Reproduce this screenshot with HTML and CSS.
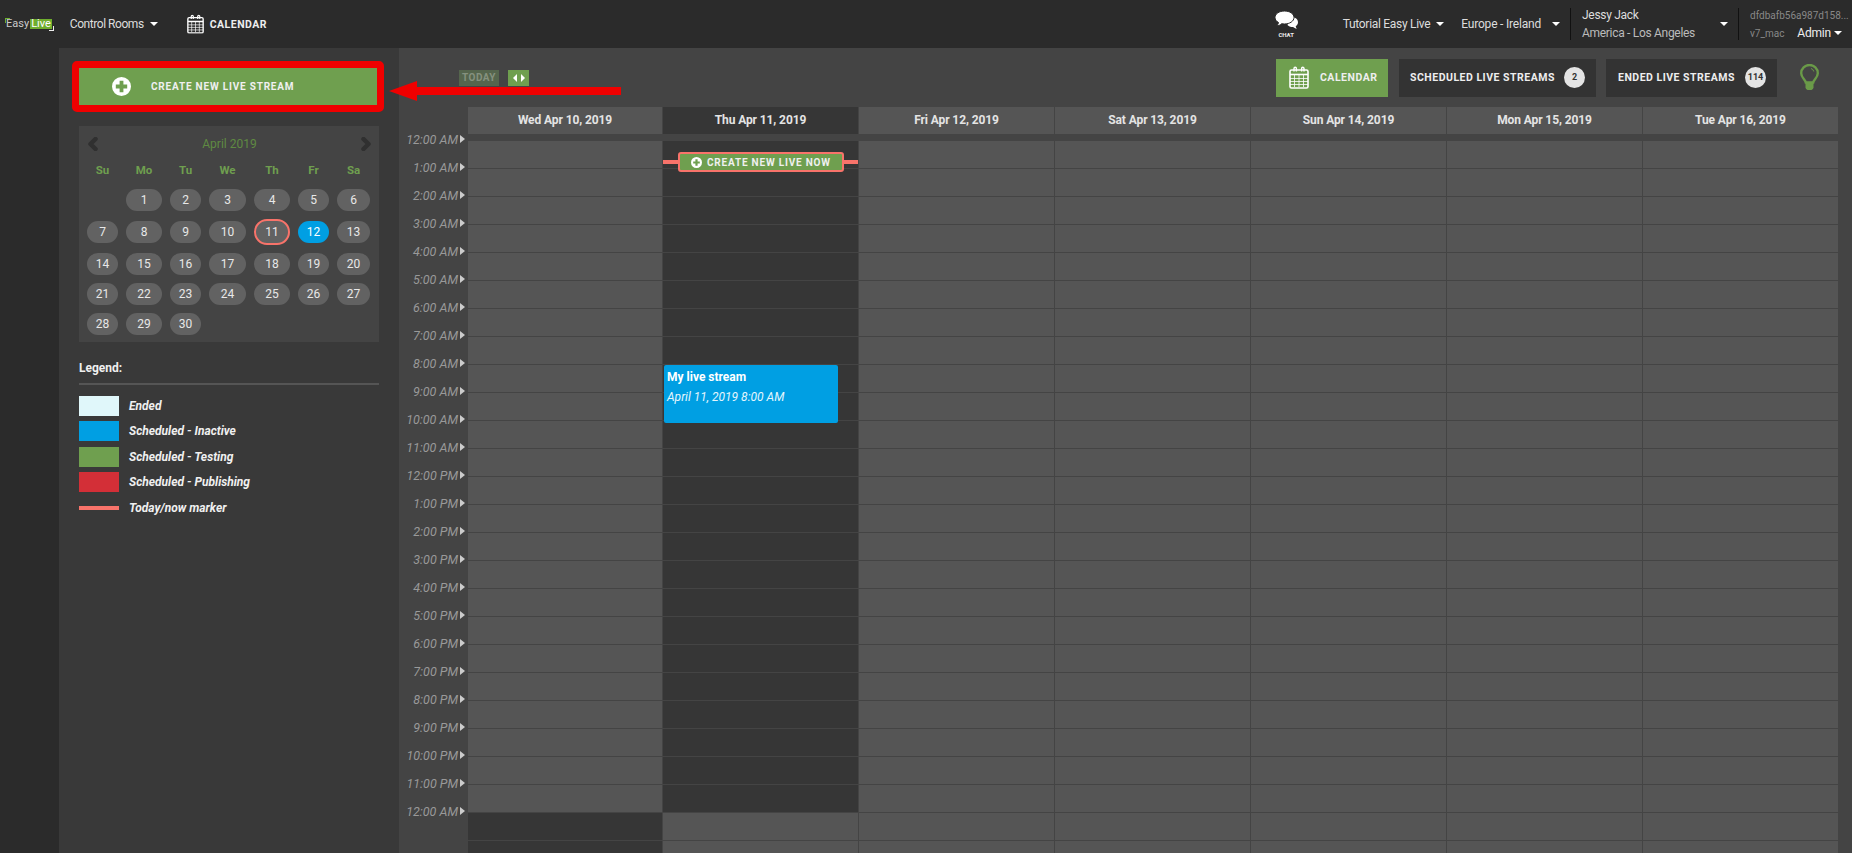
FILE: index.html
```html
<!DOCTYPE html>
<html lang="en">
<head>
    <meta charset="UTF-8">
    <title>Easy Live - Calendar</title>
    <link rel="stylesheet" href="styles.css">
</head>
<body>
<!-- top bar -->
<header class="topbar">
    <a class="logo">Easy<span class="logo-live">Live</span></a>
    <a class="nav-item rooms">Control Rooms<i class="caret"></i></a>
    <a class="nav-cal">
        <svg class="cal-icon small" viewBox="0 0 20 23"><use href="#calendar"></use></svg>
        CALENDAR
    </a>
    <div class="topbar-right">
        <a class="chat">
            <svg class="chat-icon" viewBox="0 0 23 18">
                <path d="M15 6.500h3c2.700 0 5 2 5 4.800 0 1.800-.9 3-2.300 3.900.1 1 .5 1.800 1.100 2.500-1.500-.1-2.800-.7-3.700-1.600-2.500 0-4.800-.8-5.600-2.100z" fill="#fff"/>
                <path d="M9.500 0C4.300 0 0 2.800 0 6.500c0 2.100 1.400 3.900 3.500 5-.2 1.300-.9 2.400-1.800 3.200 2 0 3.800-.8 5-2 .9.200 1.800.3 2.800.3 5.200 0 9.500-2.800 9.500-6.500S14.700 0 9.500 0z" fill="#fff" stroke="#2b2b2b"/>
            </svg>
            <span class="chat-label">CHAT</span>
        </a>
        <a class="nav-item tutorial">Tutorial Easy Live<i class="caret"></i></a>
        <a class="nav-item region">Europe - Ireland<i class="caret"></i></a>
        <div class="user">
            <div class="user-text">
                <span>Jessy Jack</span>
                <span class="user-zone">America - Los Angeles</span>
            </div>
            <i class="caret"></i>
        </div>
        <div class="account">
            <span class="account-id">dfdbafb56a987d158...</span>
            <div class="account-row">
                <span class="account-id">v7_mac</span>
                <a class="nav-item admin">Admin<i class="caret"></i></a>
            </div>
        </div>
    </div>
</header>

<div class="layout">
    <div class="rail"></div>

    <!-- left column -->
    <aside class="sidebar">
        <a class="create-btn">
            <svg class="plus-icon" viewBox="0 0 20 20"><use href="#plus"></use></svg>
            CREATE NEW LIVE STREAM
        </a>

        <div class="picker">
            <div class="picker-head">
                <svg class="picker-arrow" viewBox="0 0 12 14"><path d="M8 2 3 7l5 5" /></svg>
                <span>April 2019</span>
                <svg class="picker-arrow" viewBox="0 0 12 14"><path d="m4 2 5 5-5 5" /></svg>
            </div>
            <div class="picker-grid">
                <b>Su</b><b>Mo</b><b>Tu</b><b>We</b><b>Th</b><b>Fr</b><b>Sa</b>
                <span class="blank"></span><span>1</span><span>2</span><span>3</span><span>4</span><span>5</span><span>6</span>
                <span>7</span><span>8</span><span>9</span><span>10</span><span class="today">11</span><span class="active">12</span><span>13</span>
                <span>14</span><span>15</span><span>16</span><span>17</span><span>18</span><span>19</span><span>20</span>
                <span>21</span><span>22</span><span>23</span><span>24</span><span>25</span><span>26</span><span>27</span>
                <span>28</span><span>29</span><span>30</span>
            </div>
        </div>

        <div class="legend">
            <div class="legend-title">Legend:</div>
            <div class="legend-row"><i class="swatch ended"></i>Ended</div>
            <div class="legend-row"><i class="swatch inactive"></i>Scheduled - Inactive</div>
            <div class="legend-row"><i class="swatch testing"></i>Scheduled - Testing</div>
            <div class="legend-row"><i class="swatch publishing"></i>Scheduled - Publishing</div>
            <div class="legend-row"><i class="swatch marker"></i>Today/now marker</div>
        </div>
    </aside>

    <!-- calendar -->
    <main class="main">
        <div class="toolbar">
            <a class="today-btn">TODAY</a>
            <a class="step-btn"><i class="tri-left"></i><i class="tri-right"></i></a>
            <div class="views">
                <a class="view view-on">
                    <svg class="cal-icon" viewBox="0 0 20 23"><use href="#calendar"></use></svg>
                    CALENDAR
                </a>
                <a class="view view-sched">SCHEDULED LIVE STREAMS<span class="count">2</span></a>
                <a class="view view-ended">ENDED LIVE STREAMS<span class="count">114</span></a>
                <svg class="bulb" viewBox="0 0 19 27">
                    <path d="M5.800 18.500C5.300 15.500 1.200 13.500 1.200 9.200A8.300 8.200 0 0 1 17.800 9.200C17.800 13.500 13.700 15.500 13.200 18.500Z" fill="none" stroke="#6a9a48" stroke-width="2.400"/>
                    <path d="M11 4.500a4 4 0 0 1 2.800 3" fill="none" stroke="#6a9a48"/>
                    <path d="M5.500 19h8v4.500a3 3 0 0 1-2 2.500h-4a3 3 0 0 1-2-2.500z" fill="#6a9a48"/>
                </svg>
            </div>
        </div>

        <div class="week-head">
            <div>Wed Apr 10, 2019</div>
            <div class="head-today">Thu Apr 11, 2019</div>
            <div>Fri Apr 12, 2019</div>
            <div>Sat Apr 13, 2019</div>
            <div>Sun Apr 14, 2019</div>
            <div>Mon Apr 15, 2019</div>
            <div>Tue Apr 16, 2019</div>
        </div>

        <div class="week-body">
            <div class="times">
                <div>12:00 AM</div><div>1:00 AM</div><div>2:00 AM</div><div>3:00 AM</div><div>4:00 AM</div>
                <div>5:00 AM</div><div>6:00 AM</div><div>7:00 AM</div><div>8:00 AM</div><div>9:00 AM</div>
                <div>10:00 AM</div><div>11:00 AM</div><div>12:00 PM</div><div>1:00 PM</div><div>2:00 PM</div>
                <div>3:00 PM</div><div>4:00 PM</div><div>5:00 PM</div><div>6:00 PM</div><div>7:00 PM</div>
                <div>8:00 PM</div><div>9:00 PM</div><div>10:00 PM</div><div>11:00 PM</div><div>12:00 AM</div>
            </div>
            <div class="days">
                <div class="day day-before"></div>
                <div class="day day-today">
                    <div class="now-line"></div>
                    <a class="now-btn">
                        <svg class="plus-icon tiny" viewBox="0 0 20 20"><use href="#plus"></use></svg>
                        CREATE NEW LIVE NOW
                    </a>
                    <div class="event">
                        <strong>My live stream</strong>
                        <em>April 11, 2019 8:00 AM</em>
                    </div>
                </div>
                <div class="day"></div>
                <div class="day"></div>
                <div class="day"></div>
                <div class="day"></div>
                <div class="day"></div>
            </div>
        </div>
    </main>
</div>

<!-- red annotation drawn over the screenshot -->
<div class="mark-box"></div>
<svg class="mark-arrow" viewBox="0 0 232 20"><path d="M0 10 28 0v6h204v8H28v6z" fill="#f00000"/></svg>

<svg class="defs" width="0" height="0">
    <symbol id="calendar" viewBox="0 0 20 23">
        <rect x="1" y="4" width="18" height="18" rx="1.500" fill="none" stroke="#fff" stroke-width="1.600"/>
        <path d="M1 8.500h18" stroke="#fff" stroke-width="1.600"/>
        <path d="M1 12.500h18M1 15.500h18M1 18.500h18M5.500 9v12M10 9v12M14.500 9v12" stroke="#fff" stroke-width=".8"/>
        <path d="M5 5.500V2.500a1.200 1.200 0 0 1 2.400 0v3M12.600 5.500V2.500a1.200 1.200 0 0 1 2.400 0v3" fill="none" stroke="#fff" stroke-width="1.400"/>
    </symbol>
    <symbol id="plus" viewBox="0 0 20 20">
        <path fill-rule="evenodd" d="M10 0a10 10 0 1 1 0 20 10 10 0 0 1 0-20zM8 4v4H4v4h4v4h4v-4h4V8h-4V4z" fill="#fff"/>
    </symbol>
</svg>
</body>
</html>
```
FILE: styles.css
```css
*{
    box-sizing: border-box;
}
html, body{
    height: 100%;
    margin: 0;
    overflow: hidden;
}
body{
    position: relative;
    display: flex;
    flex-direction: column;
    background: #2b2b2b;
    color: #fff;
    font-family: "Roboto", "Liberation Sans", sans-serif;
    font-size: 12px;
}
.defs{
    position: absolute;
}

/* top bar */
.topbar{
    display: flex;
    align-items: center;
    flex: 0 0 48px;
    background: #2b2b2b;
    color: #ddd;
}
.logo{
    position: relative;
    display: flex;
    align-items: center;
    margin-left: 6px;
    font-size: 11px;
    line-height: 10px;
    color: #ccc;
}
.logo::before{
    content: "";
    position: absolute;
    top: -1px;
    left: -1px;
    width: 4px;
    height: 4px;
    border-top: 1px solid #6fae2e;
    border-left: 1px solid #6fae2e;
}
.logo::after{
    content: "";
    position: absolute;
    bottom: -2px;
    right: -2px;
    width: 4px;
    height: 4px;
    border-bottom: 1px solid #eee;
    border-right: 1px solid #eee;
}
.logo-live{
    margin-left: 1px;
    padding: 0 1px;
    background: #6fae2e;
    color: #fff;
}
.nav-item{
    display: flex;
    align-items: center;
    font-size: 12px;
    letter-spacing: -0.2px;
    color: #ddd;
}
.caret{
    display: inline-block;
    width: 0;
    height: 0;
    border-left: 4px solid transparent;
    border-right: 4px solid transparent;
    border-top: 4px solid #fff;
}
.rooms{
    margin-left: 18px;
    letter-spacing: -0.45px;
}
.rooms .caret{
    margin-left: 6px;
}
.nav-cal{
    display: flex;
    align-items: center;
    margin-left: 29px;
    font-size: 10.500px;
    font-weight: 700;
    letter-spacing: 0.5px;
    color: #eee;
}
.cal-icon{
    width: 20px;
    height: 23px;
    margin-right: 11px;
}
.cal-icon.small{
    width: 17px;
    height: 20px;
    margin-right: 6px;
}
.topbar-right{
    display: flex;
    align-items: center;
    margin-left: auto;
    height: 100%;
}
.chat{
    display: flex;
    flex-direction: column;
    align-items: center;
    margin-right: 45px;
}
.chat-icon{
    width: 23px;
    height: 18px;
}
.chat-label{
    margin-top: 2px;
    font-size: 6px;
    font-weight: 700;
    color: #eee;
}
.tutorial{
    letter-spacing: -0.3px;
}
.tutorial .caret{
    margin-left: 6px;
}
.region{
    margin-left: 17px;
}
.region .caret{
    margin-left: 11px;
}
.user{
    display: flex;
    align-items: center;
    width: 169px;
    height: 32px;
    margin-left: 10px;
    padding-left: 11px;
    border-left: 1px solid #111;
    border-right: 1px solid #111;
}
.user-text{
    display: flex;
    flex-direction: column;
    gap: 5px;
    width: 138px;
    font-size: 12px;
    line-height: 13px;
    letter-spacing: -0.3px;
    color: #ddd;
}
.user-zone{
    color: #bbb;
}
.account{
    display: flex;
    flex-direction: column;
    gap: 5px;
    width: 113px;
    padding-left: 11px;
    line-height: 13px;
}
.account-id{
    font-size: 10px;
    color: #888;
}
.account-row{
    display: flex;
    justify-content: space-between;
    padding-right: 10px;
}
.admin{
    color: #eee;
}
.admin .caret{
    margin-left: 3px;
}

/* page columns */
.layout{
    display: flex;
    flex: 1;
    min-height: 0;
}
.rail{
    flex: 0 0 59px;
    background: #2b2b2b;
}
.sidebar{
    flex: 0 0 340px;
    padding: 20px 20px 0;
    background: #393939;
}
.create-btn{
    display: flex;
    align-items: center;
    height: 37px;
    padding-left: 33px;
    background: #6f9f4f;
    font-size: 10px;
    font-weight: 700;
    letter-spacing: 0.8px;
    color: #f0f0f0;
}
.plus-icon{
    width: 19px;
    height: 19px;
    margin-right: 20px;
}
.plus-icon.tiny{
    width: 11px;
    height: 11px;
    margin-right: 5px;
}

/* month picker */
.picker{
    height: 216px;
    margin-top: 21px;
    background: #444;
}
.picker-head{
    display: flex;
    align-items: center;
    justify-content: space-between;
    height: 32px;
    padding: 4px 7px 0 8px;
    font-size: 12px;
    color: #5f8a42;
}
.picker-arrow{
    width: 13px;
    height: 14px;
    fill: none;
    stroke: #303030;
    stroke-width: 4.500;
    stroke-linecap: round;
    stroke-linejoin: round;
}
.picker-grid{
    display: grid;
    grid-template-columns: 31px 36px 31px 37px 36px 31px 33px;
    grid-template-rows: 31px 32px 32px 30px 30px 22px;
    column-gap: 8px;
    padding-left: 8px;
    text-align: center;
}
.picker-grid b{
    padding-top: 1px;
    line-height: 22px;
    font-size: 11.500px;
    font-weight: 700;
    color: #6f9f4f;
}
.picker-grid span{
    height: 22px;
    border-radius: 11px;
    background: #626262;
    font-size: 12px;
    line-height: 22px;
    color: #e8e8e8;
}
.picker-grid .blank{
    background: none;
}
.picker-grid .today{
    height: 26px;
    margin-top: -2px;
    border: 2px solid #f8736a;
    border-radius: 13px;
}
.picker-grid .active{
    background: #009fe3;
    color: #fff;
}

/* legend */
.legend{
    margin-top: 17px;
}
.legend-title{
    height: 26px;
    border-bottom: 2px solid #555;
    font-size: 12px;
    font-weight: 700;
    line-height: 18px;
    color: #f0f0f0;
}
.legend-row{
    display: flex;
    align-items: center;
    height: 25.500px;
    font-size: 12px;
    font-style: italic;
    font-weight: 700;
    color: #f0f0f0;
}
.legend-title + .legend-row{
    margin-top: 8px;
}
.swatch{
    flex: 0 0 40px;
    height: 20px;
    margin-right: 10px;
}
.ended{
    background: #e0f7fa;
}
.inactive{
    background: #009fe3;
}
.testing{
    background: #6f9f4f;
}
.publishing{
    background: #d32f37;
}
.swatch.marker{
    height: 4px;
    background: #f8736a;
}

/* calendar */
.main{
    flex: 1;
    min-width: 0;
    display: flex;
    flex-direction: column;
    padding-right: 13px;
    background: #444;
}
.toolbar{
    display: flex;
    align-items: center;
    flex: 0 0 59px;
    padding-left: 60px;
}
.today-btn{
    width: 40px;
    height: 16px;
    background: #55654d;
    font-size: 10px;
    font-weight: 700;
    line-height: 16px;
    letter-spacing: 0.5px;
    text-align: center;
    color: #85917f;
}
.step-btn{
    display: flex;
    align-items: center;
    justify-content: center;
    gap: 4px;
    width: 21px;
    height: 16px;
    margin-left: 9px;
    background: #6f9f4f;
}
.tri-left, .tri-right{
    width: 0;
    height: 0;
    border-top: 4px solid transparent;
    border-bottom: 4px solid transparent;
}
.tri-left{
    border-right: 4px solid #fff;
}
.tri-right{
    border-left: 4px solid #fff;
}
.views{
    display: flex;
    align-items: center;
    margin-left: auto;
    padding-right: 20px;
}
.view{
    display: flex;
    align-items: center;
    height: 38px;
    background: #333;
    font-size: 10.500px;
    font-weight: 700;
    letter-spacing: 0.5px;
    color: #eee;
}
.view-on{
    width: 112px;
    padding-left: 13px;
    background: #6f9f4f;
}
.view-sched{
    width: 197px;
    margin-left: 11px;
    padding-left: 11px;
}
.view-ended{
    width: 171px;
    margin-left: 10px;
    padding-left: 12px;
}
.count{
    display: block;
    width: 21px;
    height: 21px;
    margin-left: auto;
    margin-right: 11px;
    border-radius: 50%;
    background: #e4e4e4;
    font-size: 9px;
    line-height: 21px;
    letter-spacing: 0;
    text-align: center;
    color: #333;
}
.bulb{
    width: 19px;
    height: 27px;
    margin-left: 23px;
}
.week-head{
    display: grid;
    grid-template-columns: repeat(7, 1fr);
    flex: 0 0 27px;
    margin-left: 68px;
}
.week-head div{
    border-right: 1px solid #444;
    background: #555;
    font-size: 12px;
    font-weight: 700;
    line-height: 27px;
    letter-spacing: -0.1px;
    text-align: center;
    color: #e4e4e4;
}
.week-head div:first-child{
    border-left: 1px solid #444;
}
.week-head .head-today{
    background: #363636;
}
.week-body{
    display: flex;
    flex: 1;
    min-height: 0;
    margin-top: 7px;
}
.times{
    flex: 0 0 68px;
    margin-top: -16px;
    padding-right: 2px;
}
.times div{
    display: flex;
    align-items: center;
    justify-content: flex-end;
    height: 28px;
    font-size: 12.500px;
    font-style: italic;
    color: #999;
}
.times div::after{
    content: "";
    margin-left: 2px;
    border-left: 5px solid #ccc;
    border-top: 4px solid transparent;
    border-bottom: 4px solid transparent;
}
.days{
    flex: 1;
    display: grid;
    grid-template-columns: repeat(7, 1fr);
}
.day{
    position: relative;
    border-right: 1px solid #444;
    background: repeating-linear-gradient(to bottom, transparent 0, transparent 27px, #444 27px, #444 28px), #555;
}
.day-before{
    border-left: 1px solid #444;
    background: repeating-linear-gradient(to bottom, transparent 0, transparent 27px, #444 27px, #444 28px),
                linear-gradient(to bottom, #555 672px, #363636 672px);
}
.day-today{
    background: repeating-linear-gradient(to bottom, transparent 0, transparent 27px, #444 27px, #444 28px),
                linear-gradient(to bottom, #363636 672px, #555 672px);
}
.now-line{
    position: absolute;
    top: 19px;
    left: 0;
    right: 0;
    height: 4px;
    background: #f8736a;
}
.now-btn{
    position: absolute;
    top: 11px;
    left: 15px;
    display: flex;
    align-items: center;
    width: 166px;
    height: 20px;
    padding-left: 11px;
    border: 2px solid #f8736a;
    border-radius: 3px;
    background: #6f9f4f;
    font-size: 10px;
    font-weight: 700;
    letter-spacing: 0.8px;
    color: #f0f0f0;
}
.event{
    position: absolute;
    top: 224px;
    left: 1px;
    display: flex;
    flex-direction: column;
    gap: 5px;
    width: 174px;
    height: 58px;
    padding: 5px 3px;
    border-radius: 2px;
    background: #009fe3;
    font-size: 12px;
    line-height: 14px;
    color: #fff;
}
.event em{
    padding-top: 1px;
    color: #e4f6fd;
}

/* annotation */
.mark-box{
    position: absolute;
    top: 61px;
    left: 72px;
    width: 312px;
    height: 51px;
    border: 7px solid #f00000;
    border-radius: 5px;
}
.mark-arrow{
    position: absolute;
    top: 81px;
    left: 389px;
    width: 232px;
    height: 20px;
}
```
